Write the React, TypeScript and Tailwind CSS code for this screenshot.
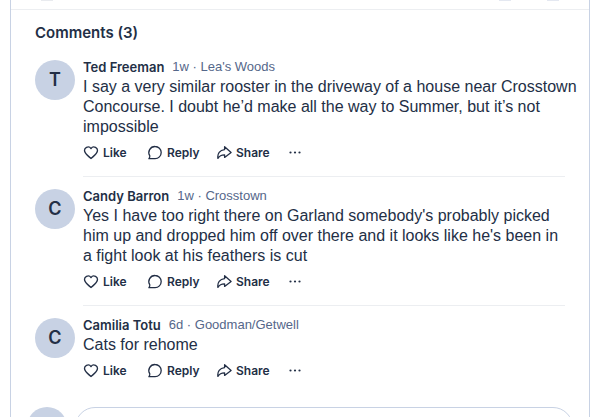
import React from "react";

type Comment = {
  id: number;
  author: string;
  age: string;
  place: string;
  text: string;
};

const comments: Comment[] = [
  {
    id: 1,
    author: "Ted Freeman",
    age: "1w",
    place: "Lea's Woods",
    text: "I say a very similar rooster in the driveway of a house near Crosstown Concourse. I doubt he’d make all the way to Summer, but it’s not impossible",
  },
  {
    id: 2,
    author: "Candy Barron",
    age: "1w",
    place: "Crosstown",
    text: "Yes I have too right there on Garland somebody's probably picked him up and dropped him off over there and it looks like he's been in a\u00a0fight look at his feathers is cut",
  },
  {
    id: 3,
    author: "Camilia Totu",
    age: "6d",
    place: "Goodman/Getwell",
    text: "Cats for rehome",
  },
];

const iconProps = {
  width: 16,
  height: 16,
  viewBox: "0 0 16 16",
  fill: "none",
  stroke: "currentColor",
  strokeWidth: 1.3,
  strokeLinejoin: "round" as const,
  strokeLinecap: "round" as const,
  "aria-hidden": true,
};

const HeartIcon = () => (
  <svg {...iconProps}>
    <path d="M8 3.6C7 2 5 1.6 3.5 2.4 1.7 3.4 1.2 5.6 2.1 7.4c1 2 3.8 4.4 5.9 6.1 2.1-1.7 4.9-4.1 5.9-6.1.9-1.8.4-4-1.4-5C11 1.6 9 2 8 3.6Z" />
  </svg>
);

const BubbleIcon = () => (
  <svg {...iconProps}>
    <path d="M8.1 1.5a6.1 6.1 0 1 1 0 12.2H1.9c.7-.8 1-1.5.9-2.8A6.1 6.1 0 0 1 8.1 1.5Z" />
  </svg>
);

const ShareIcon = () => (
  <svg {...iconProps}>
    <path d="M8.6 1.7 15.1 7.4l-6.5 5v-2.6c-3.2-.1-5.1 1-6.7 3.6C1.2 8.4 3.8 5 8.6 4.6Z" />
  </svg>
);

const Avatar = ({ letter }: { letter: string }) => (
  <div className="flex size-10 shrink-0 items-center justify-center rounded-full bg-[#c8d2e4] text-lg font-semibold">
    {letter}
  </div>
);

const CommentItem = ({ comment, last }: { comment: Comment; last: boolean }) => (
  <li className="flex gap-2 pt-3">
    <Avatar letter={comment.author[0]} />
    <div className={`min-w-0 flex-1 ${last ? "" : "border-b border-[#eceef1] pb-[13px]"}`}>
      <div className="flex items-center gap-2 pb-[3px] leading-[14px]">
        <h3 className="text-[13px] leading-[14px] font-semibold">{comment.author}</h3>
        <span className="font-['Liberation_Sans',Arial,sans-serif] text-[13px] text-[#55678a]">
          {comment.age} · {comment.place}
        </span>
      </div>
      <p className="-mr-3 font-['Liberation_Sans',Arial,sans-serif] text-base leading-5">{comment.text}</p>
      {/* Actions */}
      <div className="mt-1.5 flex h-5 items-center text-[12px] font-semibold">
        <button className="flex w-16 items-center gap-1">
          <HeartIcon />
          Like
        </button>
        <button className="flex w-[69px] items-center gap-1">
          <BubbleIcon />
          Reply
        </button>
        <button className="flex w-[72px] items-center gap-1">
          <ShareIcon />
          Share
        </button>
        <button aria-label="More options">
          <svg width="14" height="16" viewBox="0 0 14 16" fill="currentColor" aria-hidden="true">
            <circle cx="2.5" cy="7.5" r="1.1" />
            <circle cx="7" cy="7.5" r="1.1" />
            <circle cx="11.5" cy="7.5" r="1.1" />
          </svg>
        </button>
      </div>
    </div>
  </li>
);

export default function App() {
  return (
    <div className="h-screen overflow-hidden bg-white pr-[21px] pl-2.5 font-[Inter,'Liberation_Sans',sans-serif] text-[#232f46]">
      <main className="min-h-full border-x border-[#c8d2e4]">
        {/* Bottom edge of the post's action bar */}
        <div className="flex h-2.5 items-start border-b border-[#eceef1] px-[30px]">
          <span className="mr-auto h-px w-3 bg-[#e9ebef]" />
          <span className="mr-9 h-px w-3 bg-[#e4e8f1]" />
          <span className="h-px w-3 bg-[#e4e8f1]" />
        </div>
        <section className="px-6 pt-[13px]">
          <h2 className="text-[15px] leading-5 font-semibold">Comments (3)</h2>
          <ul className="pt-[5px]">
            {comments.map((comment, index) => (
              <CommentItem key={comment.id} comment={comment} last={index === comments.length - 1} />
            ))}
          </ul>
        </section>
        <div className="mt-[26px] flex gap-2 px-4">
          <div className="size-10 shrink-0 rounded-full bg-[#c8d2e4]" />
          <input
            aria-label="Add a comment"
            className="h-10 min-w-0 flex-1 rounded-full border border-[#c8d2e4] px-4 outline-none"
          />
        </div>
      </main>
    </div>
  );
}
